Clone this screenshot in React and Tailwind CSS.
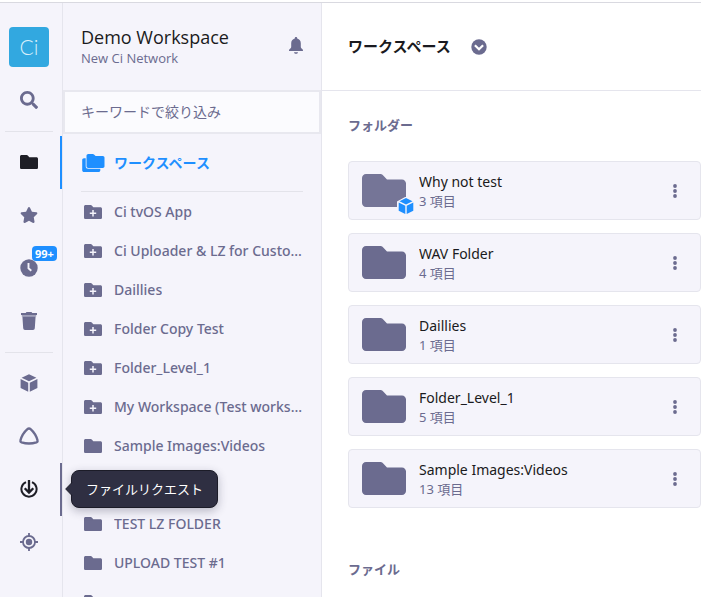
import React, { useState } from 'react';
import clsx from 'clsx';
import { FaFolder, FaSearch, FaStar } from 'react-icons/fa';

const ClockIcon = () => (
  <svg viewBox="0 0 18 18" className="size-[18px]" aria-hidden="true">
    <circle cx="9" cy="9" r="8.700" fill="currentColor" />
    <path d="M8.500 4v5.300l2.800 2.500" fill="none" stroke="#f5f4fb" strokeWidth="1.900" />
  </svg>
);

const TrashIcon = () => (
  <svg viewBox="0 0 18 18" className="size-[18px]" fill="currentColor" aria-hidden="true">
    <path d="M6.500 0h5l.8 1H17v2H1V1h4.700z" />
    <path d="M1.800 3h14.400v1.600H1.800z" opacity=".6" />
    <path d="M2.400 4.600h13.200l-.8 11.700a1.800 1.800 0 0 1-1.800 1.700H5a1.800 1.800 0 0 1-1.800-1.700z" />
  </svg>
);

const CubeIcon = () => (
  <svg viewBox="0 0 18 18" className="size-[18px]" fill="currentColor" aria-hidden="true">
    <path d="M9 .2 16.400 3.700 9 7.200 1.600 3.700z" />
    <path d="M.6 5.100 8.200 8.700v9.100L.6 14.100zM17.400 5.100 9.800 8.700v9.100l7.600-3.700z" />
  </svg>
);

const TriangleIcon = () => (
  <svg viewBox="0 0 20 18" className="h-[18px] w-5" fill="none" stroke="currentColor" strokeWidth="2.400" strokeLinejoin="round" aria-hidden="true">
    <path d="M8.400 2.200C9.300 1.300 10.700 1.300 11.600 2.200 15 5.200 17.300 8.900 18.500 13.300c.3 1-.1 1.700-1 2-4.900 1.500-10.100 1.500-15 0-.9-.3-1.300-1-1-2C2.700 8.900 5 5.200 8.400 2.200Z" />
  </svg>
);

const RequestIcon = () => (
  <svg viewBox="0 0 18 18" className="size-[18px]" fill="none" stroke="currentColor" strokeWidth="2" aria-hidden="true">
    <path d="M6 2.100a7.600 7.600 0 1 0 6 0" />
    <path d="M9 0v12M4.700 8.200 9 12.500l4.300-4.300" strokeWidth="2.300" />
  </svg>
);

const TargetIcon = () => (
  <svg viewBox="0 0 18 18" className="size-[18px]" fill="none" stroke="currentColor" strokeWidth="1.800" aria-hidden="true">
    <circle cx="9" cy="9" r="6" />
    <circle cx="9" cy="9" r="3.200" fill="currentColor" stroke="none" />
    <path d="M9 0v3M9 15v3M0 9h3M15 9h3" />
  </svg>
);

const BellIcon = () => (
  <svg viewBox="0 0 14 17" className="h-[17px] w-3.5" fill="currentColor" aria-hidden="true">
    <path d="M7 0c.7 0 1.200.5 1.200 1.100v.4c2.300.6 3.600 2.400 3.600 4.800v3.400c0 1 .6 1.700 1.400 2.400.5.4.8.9.8 1.900H0c0-1 .3-1.500.8-1.900.8-.7 1.400-1.400 1.400-2.400V6.300c0-2.400 1.300-4.200 3.600-4.800v-.4C5.800.5 6.300 0 7 0z" />
    <path d="M5 15.200h4c-.2 1-1 1.600-2 1.600s-1.800-.6-2-1.600z" />
  </svg>
);

const FolderShape = ({ className, plus }) => (
  <svg viewBox="0 0 18 14" className={className} fill="currentColor" aria-hidden="true">
    <path d="M1.600 0h5.100c.4 0 .8.200 1.100.5l1.500 1.700h7.100c.9 0 1.600.6 1.600 1.500v8.700c0 .9-.7 1.600-1.600 1.600H1.600C.7 14 0 13.300 0 12.400V1.600C0 .7.700 0 1.600 0z" />
    {plus && <path d="M9 5v6.400M5.800 8.200h6.400" stroke="#f5f4fb" strokeWidth="1.500" />}
  </svg>
);

const BigFolder = () => (
  <svg viewBox="0 0 44 33" className="h-[33px] w-11" fill="currentColor" aria-hidden="true">
    <path d="M4 0h14.500c.8 0 1.500.3 2 .8L25 5.500h15c2.200 0 4 1.800 4 4V29c0 2.200-1.800 4-4 4H4c-2.200 0-4-1.800-4-4V4c0-2.200 1.800-4 4-4z" />
  </svg>
);

const FoldersIcon = () => (
  <svg viewBox="0 0 24 18" className="h-[18px] w-6" fill="currentColor" aria-hidden="true">
    <path d="M3 4.200h13v9.600h3.300v2.400c0 1-.8 1.800-1.800 1.800H3c-1 0-1.800-.8-1.800-1.800V6c0-1 .8-1.800 1.800-1.800z" />
    <path
      d="M7.300 0h4.500c.5 0 .9.200 1.200.5L14.600 2h7.200c1 0 1.700.8 1.700 1.800v8.400c0 1-.8 1.700-1.700 1.700H7.300c-1 0-1.800-.7-1.800-1.700V1.800C5.500.8 6.300 0 7.300 0z"
      stroke="#f5f4fb"
      strokeWidth="1.600"
      paintOrder="stroke"
    />
  </svg>
);

const railGroups = [
  [{ id: 'search', label: '検索', icon: <FaSearch size={18} /> }],
  [
    { id: 'workspace', label: 'ワークスペース', icon: <FolderShape className="h-3.5 w-[18px]" /> },
    { id: 'favorites', label: 'お気に入り', icon: <FaStar size={18} /> },
    { id: 'recent', label: '最近', icon: <ClockIcon />, badge: '99+' },
    { id: 'trash', label: 'ゴミ箱', icon: <TrashIcon /> },
  ],
  [
    { id: 'catalog', label: 'カタログ', icon: <CubeIcon /> },
    { id: 'mediabox', label: 'メディアボックス', icon: <TriangleIcon /> },
    { id: 'requests', label: 'ファイルリクエスト', icon: <RequestIcon />, hovered: true },
    { id: 'target', label: 'ターゲット', icon: <TargetIcon /> },
  ],
];

const treeFolders = [
  { name: 'Ci tvOS App', plus: true },
  { name: 'Ci Uploader & LZ for Customers', plus: true },
  { name: 'Daillies', plus: true },
  { name: 'Folder Copy Test', plus: true },
  { name: 'Folder_Level_1', plus: true },
  { name: 'My Workspace (Test workspace)', plus: true },
  { name: 'Sample Images:Videos' },
  { name: 'Test' },
  { name: 'TEST LZ FOLDER' },
  { name: 'UPLOAD TEST #1' },
  { name: 'raw' },
];

const folders = [
  { name: 'Why not test', count: 3, shared: true },
  { name: 'WAV Folder', count: 4 },
  { name: 'Daillies', count: 1 },
  { name: 'Folder_Level_1', count: 5 },
  { name: 'Sample Images:Videos', count: 13 },
];

const Tooltip = ({ children }) => (
  <span role="tooltip" className="absolute bottom-2 left-[71px] z-20 whitespace-nowrap rounded-lg border border-[#1c1c28] bg-[#2f2f42] px-3.5 py-2 text-[13px] leading-5 text-white shadow-[0_3px_10px_rgba(40,40,70,0.3)]">
    <svg viewBox="0 0 8 14" className="absolute -left-[7px] top-1/2 h-3.5 w-2 -translate-y-1/2" aria-hidden="true">
      <path d="M7 .5.700 7 7 13.500" fill="#2f2f42" stroke="#1c1c28" />
      <path d="M7 1h1v12H7z" fill="#2f2f42" />
    </svg>
    {children}
  </span>
);

const RailItem = ({ item, active, onSelect }) => (
  <button
    type="button"
    aria-label={item.label}
    onClick={() => onSelect(item.id)}
    className={clsx(
      'relative flex h-[53px] w-full items-center justify-center border-r-2 pb-0.5 pr-0.5',
      active && 'border-[#1e8fff] text-[#1e1e26]',
      item.hovered && !active && 'border-[#6b6b8f] text-[#1e1e26]',
      !active && !item.hovered && 'border-transparent text-[#6b6b8f]',
    )}
  >
    {item.icon}
    {item.badge && (
      <span className="absolute left-8 top-1 rounded bg-[#1e8fff] px-[3px] text-[11px] font-bold leading-[15px] text-white">
        {item.badge}
      </span>
    )}
    {item.hovered && <Tooltip>{item.label}</Tooltip>}
  </button>
);

const Rail = () => {
  const [current, setCurrent] = useState('workspace');

  return (
    <nav aria-label="メイン" className="relative z-10 flex w-[63px] shrink-0 flex-col border-r border-[#e5e5ed] pt-6">
      <a href="#home" aria-label="Ci" className="mb-[7px] ml-[9px] flex size-10 items-center justify-center rounded bg-[#32a8e0] pb-0.5 font-['Lato'] text-[21px] font-light leading-none text-[#d9f0fb]">
        Ci
      </a>
      {railGroups.map((group, i) => (
        <React.Fragment key={group[0].id}>
          {i > 0 && <hr className="my-1 ml-[5px] mr-[9px] border-[#e3e3ea]" />}
          <div>
            {group.map((item) => (
              <RailItem key={item.id} item={item} active={item.id === current} onSelect={setCurrent} />
            ))}
          </div>
        </React.Fragment>
      ))}
    </nav>
  );
};

const Sidebar = () => (
  <aside className="flex w-[259px] shrink-0 flex-col border-r border-[#e5e5ed]">
    <header className="flex h-[87px] shrink-0 items-center justify-between pb-0.5 pl-[18px] pr-[18px]">
      <div className="font-['Open_Sans','Noto_Sans_CJK_JP',sans-serif]">
        <h2 className="text-lg leading-6 text-[#1a1a20]">Demo Workspace</h2>
        <p className="text-[13px] leading-[18px] text-[#6b6b8f]">New Ci Network</p>
      </div>
      <button type="button" aria-label="通知" className="text-[#6b6b8f]">
        <BellIcon />
      </button>
    </header>
    <input
      type="text"
      aria-label="キーワードで絞り込み"
      placeholder="キーワードで絞り込み"
      className="h-11 w-full shrink-0 border-2 border-[#e8e8ef] bg-[#fbfbfe] px-4 pb-0.5 text-sm text-[#1a1a20] outline-none placeholder:text-[#6b6b8f]"
    />
    <a href="#workspace" className="mx-[18px] flex h-[58px] shrink-0 items-center gap-[9px] border-b border-[#e3e3ea] text-sm font-bold text-[#1e8fff]">
      <FoldersIcon />
      ワークスペース
    </a>
    <ul>
      {treeFolders.map((folder) => (
        <li key={folder.name}>
          <a href="#folder" className="flex h-[39px] items-center gap-3 pl-[21px] pr-[18px] text-sm font-medium text-[#6b6b8f]">
            <FolderShape plus={folder.plus} className="h-3.5 w-[18px] shrink-0" />
            <span className="truncate">{folder.name}</span>
          </a>
        </li>
      ))}
    </ul>
  </aside>
);

const FolderCard = ({ folder }) => (
  <li className="flex h-[59px] items-center rounded border border-[#e5e5ed] bg-[#f5f4fb] pl-[13px] pr-5">
    <div className={clsx('relative mr-[13px]', folder.shared ? 'text-[#757597]' : 'text-[#6b6b8f]')}>
      <BigFolder />
      {folder.shared && (
        <svg viewBox="0 0 18 18" className="absolute -bottom-2 -right-[9px] size-[18px]" aria-hidden="true">
          <path d="M9-.5 18 4.500v9.500L9 18.500 0 14V4.500z" fill="#f5f4fb" />
          <path d="M9 1 15.500 4.200 9 7.400 2.500 4.200z" fill="#1e8fff" />
          <path d="M1.700 5.500 8.300 8.700v8.200l-6.600-3.200zM16.300 5.500 9.700 8.700v8.200l6.600-3.200z" fill="#1e8fff" />
        </svg>
      )}
    </div>
    <div className="min-w-0 flex-1">
      <h4 className="truncate text-sm leading-5 text-[#1a1a20]">{folder.name}</h4>
      <p className="text-[13px] leading-[18px] text-[#6b6b8f]">{folder.count} 項目</p>
    </div>
    <button type="button" aria-label={`${folder.name} メニュー`} className="text-[#6b6b8f]">
      <svg viewBox="0 0 10 16" className="h-4 w-2.5" fill="currentColor" aria-hidden="true">
        <circle cx="5" cy="3" r="1.900" />
        <circle cx="5" cy="8" r="1.900" />
        <circle cx="5" cy="13" r="1.900" />
      </svg>
    </button>
  </li>
);

export default function App() {
  return (
    <div className="flex h-screen flex-col overflow-hidden bg-[#f5f4fb] font-['Noto_Sans','Noto_Sans_CJK_JP',sans-serif] text-[#1a1a20]">
      <div className="h-[3px] shrink-0 border-b border-[#d9d9e0] bg-white" />
      <div className="flex min-h-0 flex-1">
        <Rail />
        <Sidebar />
        <main className="min-w-0 flex-1 bg-white">
          <header className="flex h-[88px] items-center gap-5 border-b border-[#e5e5ed] pl-[26px]">
            <h1 className="text-[15px] font-bold">ワークスペース</h1>
            <button type="button" aria-label="ワークスペースメニュー">
              <svg viewBox="0 0 16 16" className="size-4" aria-hidden="true">
                <circle cx="8" cy="8" r="7.700" fill="#6b6b8f" />
                <path d="m3.900 6.200 4.100 4.100 4.100-4.100" fill="none" stroke="#fff" strokeWidth="2.200" />
              </svg>
            </button>
          </header>
          <section className="pl-[26px] pt-6">
            <h3 className="text-[13px] font-bold leading-5 text-[#6b6b8f]">フォルダー</h3>
            <ul className="mt-[26px] flex flex-col gap-[13px]">
              {folders.map((folder) => (
                <FolderCard key={folder.name} folder={folder} />
              ))}
            </ul>
          </section>
          <section className="pl-[26px] pt-[51px]">
            <h3 className="text-[13px] font-bold leading-5 text-[#6b6b8f]">ファイル</h3>
          </section>
        </main>
      </div>
    </div>
  );
}
